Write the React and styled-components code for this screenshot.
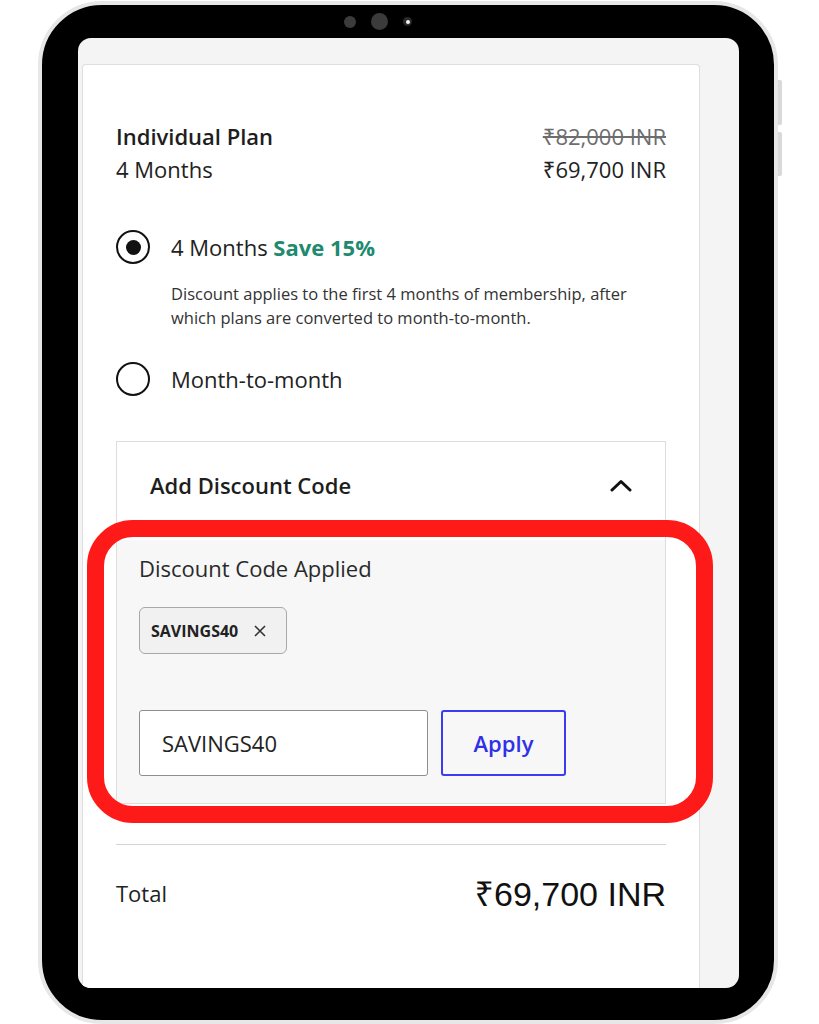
import React from 'react';
import styled, { createGlobalStyle } from 'styled-components';

const GlobalStyle = createGlobalStyle`
  html, body {
    margin: 0;
    padding: 0;
    background: #fff;
  }
  body {
    font-family: "Open Sans", "Noto Sans", sans-serif;
    color: #222;
  }
`;

const Stage = styled.div`
  width: 819px;
  height: 1024px;
  overflow: hidden;
  box-sizing: border-box;
  padding: 1px 0 0 38px;
`;

const Device = styled.div`
  position: relative;
  width: 740px;
  height: 1023px;
  box-sizing: border-box;
  background: #000;
  border: 4px solid #e7e7e7;
  border-radius: 64px;
  display: flex;
  flex-direction: column;
  padding: 0 35px 32px 36px;
`;

const SideButton = styled.div`
  position: absolute;
  right: -8px;
  top: ${p => p.$top}px;
  width: 4px;
  height: ${p => p.$h}px;
  background: #d9d9d9;
  border-radius: 0 2px 2px 0;
`;

const CameraBar = styled.div`
  height: 33px;
  display: flex;
  align-items: center;
  gap: 15px;
  padding-left: 266px;
`;

const Lens = styled.span`
  width: ${p => p.$size}px;
  height: ${p => p.$size}px;
  border-radius: 50%;
  background: #3b3b3b;
  position: relative;
  ${p => p.$glint && `
    background: #2a2a2a;
    &::after {
      content: "";
      position: absolute;
      left: 3px;
      top: 3px;
      width: 4px;
      height: 4px;
      border-radius: 50%;
      background: #f2f2f2;
    }
  `}
`;

const Screen = styled.div`
  flex: 1;
  background: #f4f4f4;
  border-radius: 13px;
  overflow: hidden;
  display: flex;
  flex-direction: column;
  padding: 26px 39px 0 4px;
`;

const Card = styled.div`
  position: relative;
  flex: 1;
  background: #fff;
  border: 1px solid #dedede;
  border-bottom: none;
  border-radius: 4px 4px 0 0;
  padding: 55px 33px 0 33px;
`;

const PlanGrid = styled.div`
  display: grid;
  grid-template-columns: 1fr auto;
  font-size: 22px;
  line-height: 33px;
`;

const PlanName = styled.div`
  font-weight: 600;
  color: #1e1e1e;
`;

const Price = styled.div`
  text-align: right;
  color: ${p => (p.$old ? '#6d6d6d' : '#222')};
  text-decoration: ${p => (p.$old ? 'line-through' : 'none')};
`;

const Options = styled.div`
  margin-top: 44px;
`;

const RadioRow = styled.label`
  display: flex;
  align-items: center;
  gap: 21px;
  height: 34px;
  font-size: 22px;
  margin-top: ${p => p.$gap || 0}px;
`;

const RadioCircle = styled.span`
  width: 34px;
  height: 34px;
  box-sizing: border-box;
  border: 2.5px solid #111;
  border-radius: 50%;
  display: flex;
  align-items: center;
  justify-content: center;
  &::after {
    content: "";
    width: 15px;
    height: 15px;
    border-radius: 50%;
    background: ${p => (p.$checked ? '#111' : 'transparent')};
  }
`;

const Save = styled.span`
  color: #1f8a6f;
  font-weight: 700;
`;

const Note = styled.p`
  margin: 18px 0 0 55px;
  font-size: 16.5px;
  line-height: 24px;
  color: #333;
`;

const DiscountBox = styled.div`
  margin-top: 45px;
  border: 1px solid #dddddd;
`;

const DiscountHead = styled.div`
  display: flex;
  align-items: center;
  justify-content: space-between;
  padding: 27px 33px 38px 33px;
  font-size: 22px;
  line-height: 33px;
  font-weight: 600;
  color: #1e1e1e;
`;

const DiscountBody = styled.div`
  background: #f7f7f7;
  padding: 13px 22px 27px 22px;
`;

const AppliedLabel = styled.div`
  font-size: 22px;
  line-height: 30px;
  color: #2a2a2a;
`;

const Chip = styled.span`
  margin-top: 24px;
  display: inline-flex;
  align-items: center;
  gap: 16px;
  height: 47px;
  box-sizing: border-box;
  padding: 0 20px 0 11px;
  border: 1px solid #a8a8a8;
  border-radius: 6px;
  background: #f1f1f1;
  font-size: 16px;
  font-weight: 700;
  color: #222;
`;

const CodeRow = styled.div`
  margin-top: 56px;
  display: flex;
  gap: 13px;
`;

const CodeInput = styled.input`
  width: 289px;
  height: 66px;
  box-sizing: border-box;
  border: 1px solid #8e8e8e;
  border-radius: 3px;
  background: #fff;
  padding: 0 0 0 22px;
  font-family: "Open Sans", "Noto Sans", sans-serif;
  font-size: 22px;
  color: #222;
  outline: none;
`;

const ApplyButton = styled.button`
  width: 125px;
  height: 66px;
  box-sizing: border-box;
  border: 2px solid #3b3bf2;
  border-radius: 3px;
  background: transparent;
  font-family: "Open Sans", "Noto Sans", sans-serif;
  font-size: 22px;
  font-weight: 600;
  color: #3030e6;
`;

const Divider = styled.hr`
  margin: 40px 0 0 0;
  border: none;
  border-top: 1px solid #d3d3d3;
`;

const TotalRow = styled.div`
  margin-top: 26px;
  height: 44px;
  display: flex;
  align-items: center;
  justify-content: space-between;
`;

const TotalLabel = styled.span`
  font-size: 22px;
  color: #222;
`;

const TotalPrice = styled.span`
  font-family: "Liberation Sans", "Noto Sans", Arial, sans-serif;
  font-size: 34px;
  color: #111;
`;

const Highlight = styled.div`
  position: absolute;
  left: 4px;
  top: 455px;
  width: 626px;
  height: 303px;
  box-sizing: border-box;
  border: 17px solid #ff1a1a;
  border-radius: 46px;
  pointer-events: none;
`;

function ChevronUp() {
  return (
    <svg width="22" height="13" viewBox="0 0 22 13" fill="none">
      <polyline points="2,11 11,2.5 20,11" stroke="#111" strokeWidth="3" strokeLinecap="round" strokeLinejoin="round" />
    </svg>
  );
}

function CloseMark() {
  return (
    <svg width="12" height="12" viewBox="0 0 12 12" fill="none">
      <path d="M1 1 L11 11 M11 1 L1 11" stroke="#333" strokeWidth="1.6" />
    </svg>
  );
}

export default function App() {
  return (
    <Stage>
      <GlobalStyle />
      <Device>
        <SideButton $top={75} $h={45} />
        <SideButton $top={127} $h={44} />
        <CameraBar>
          <Lens $size={12} />
          <Lens $size={17} />
          <Lens $size={9} $glint />
        </CameraBar>
        <Screen>
          <Card>
            <PlanGrid>
              <PlanName>Individual Plan</PlanName>
              <Price $old>₹82,000 INR</Price>
              <div>4 Months</div>
              <Price>₹69,700 INR</Price>
            </PlanGrid>

            <Options>
              <RadioRow>
                <RadioCircle $checked />
                <span>
                  4 Months <Save>Save 15%</Save>
                </span>
              </RadioRow>
              <Note>
                Discount applies to the first 4 months of membership, after
                <br />
                which plans are converted to month-to-month.
              </Note>
              <RadioRow $gap={32}>
                <RadioCircle />
                <span>Month-to-month</span>
              </RadioRow>
            </Options>

            <DiscountBox>
              <DiscountHead>
                <span>Add Discount Code</span>
                <ChevronUp />
              </DiscountHead>
              <DiscountBody>
                <AppliedLabel>Discount Code Applied</AppliedLabel>
                <Chip>
                  SAVINGS40
                  <CloseMark />
                </Chip>
                <CodeRow>
                  <CodeInput readOnly value="SAVINGS40" />
                  <ApplyButton>Apply</ApplyButton>
                </CodeRow>
              </DiscountBody>
            </DiscountBox>

            <Divider />
            <TotalRow>
              <TotalLabel>Total</TotalLabel>
              <TotalPrice>₹69,700 INR</TotalPrice>
            </TotalRow>

            <Highlight />
          </Card>
        </Screen>
      </Device>
    </Stage>
  );
}
